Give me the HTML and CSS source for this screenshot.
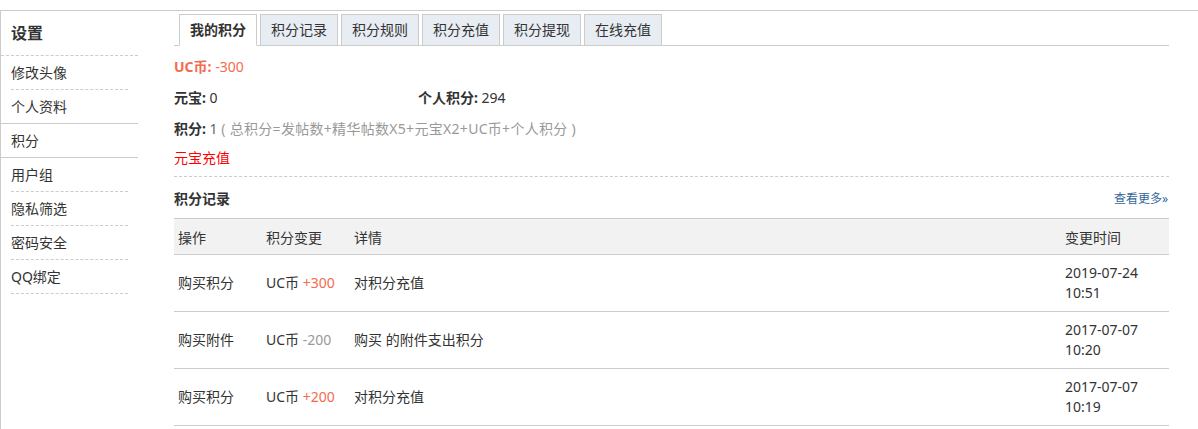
FILE: index.html
```html
<!DOCTYPE html>
<html lang="zh-CN">
<head>
<meta charset="utf-8">
<title>设置 - 积分</title>
<link rel="stylesheet" href="styles.css">
</head>
<body>
<div class="page">
  <aside class="side">
    <h2 class="side-title">设置</h2>
    <ul class="side-menu">
      <li class="side-item">修改头像</li>
      <li class="side-item nob">个人资料</li>
      <li class="side-item active">积分</li>
      <li class="side-item">用户组</li>
      <li class="side-item">隐私筛选</li>
      <li class="side-item">密码安全</li>
      <li class="side-item">QQ绑定</li>
    </ul>
  </aside>
  <main class="main">
    <ul class="tabs">
      <li class="tab current">我的积分</li>
      <li class="tab">积分记录</li>
      <li class="tab">积分规则</li>
      <li class="tab">积分充值</li>
      <li class="tab">积分提现</li>
      <li class="tab">在线充值</li>
    </ul>
    <div class="summary">
      <div class="line uc"><b>UC币:</b> -300</div>
      <div class="line two">
        <div class="col"><b>元宝:</b> 0</div>
        <div class="col"><b>个人积分:</b> 294</div>
      </div>
      <div class="line"><b>积分:</b> <span class="num">1</span> <span class="gray">( 总积分=发帖数+精华帖数X5+元宝X2+UC币+个人积分 )</span></div>
      <div class="line last"><a class="red">元宝充值</a></div>
    </div>
    <div class="rec-head">
      <h3 class="rec-title">积分记录</h3>
      <a class="more">查看更多»</a>
    </div>
    <table class="rec">
      <colgroup>
        <col class="c1"><col class="c2"><col class="c3"><col class="c4">
      </colgroup>
      <thead>
        <tr><th>操作</th><th>积分变更</th><th>详情</th><th>变更时间</th></tr>
      </thead>
      <tbody>
        <tr><td>购买积分</td><td>UC币 <span class="plus">+300</span></td><td>对积分充值</td><td>2019-07-24 10:51</td></tr>
        <tr><td>购买附件</td><td>UC币 <span class="minus">-200</span></td><td>购买 的附件支出积分</td><td>2017-07-07 10:20</td></tr>
        <tr><td>购买积分</td><td>UC币 <span class="plus">+200</span></td><td>对积分充值</td><td>2017-07-07 10:19</td></tr>
      </tbody>
    </table>
  </main>
</div>
</body>
</html>
```

FILE: styles.css
```css
* { box-sizing: border-box; }
html, body { margin: 0; padding: 0; background: #fff; }
body {
  font-family: "Noto Sans", "Noto Sans CJK SC", sans-serif;
  font-size: 14px;
  color: #333;
}
ul { list-style: none; margin: 0; padding: 0; }
h2, h3 { margin: 0; }
a { text-decoration: none; cursor: pointer; }

.page {
  margin-top: 10px;
  border-top: 1px solid #ccc;
  border-left: 1px solid #ccc;
  width: 1198px;
  min-height: 500px;
  display: flex;
  align-items: flex-start;
}

/* sidebar */
.side { width: 137px; flex: none; }
.side-title {
  height: 45px;
  line-height: 44px;
  padding-left: 10px;
  font-size: 16px;
  font-weight: 600;
  border-bottom: 1px dashed #ccc;
}
.side-item {
  margin: 0 10px;
  height: 34px;
  line-height: 33px;
  border-bottom: 1px dashed #ccc;
}
.side-item.nob { border-bottom: none; height: 33px; }
.side-item.active {
  margin: 0;
  padding-left: 10px;
  height: 35px;
  border-top: 1px solid #ccc;
  border-bottom: 1px solid #ccc;
}

/* main */
.main {
  margin-left: 36px;
  width: 995px;
  padding-top: 3px;
}
.tabs {
  display: flex;
  gap: 3px;
  padding-left: 5px;
  height: 32px;
  border-bottom: 1px solid #ccc;
}
.tab {
  width: 78px;
  height: 32px;
  line-height: 30px;
  text-align: center;
  border: 1px solid #ccc;
  background: #e7edf3;
  color: #333;
}
.tab.current {
  background: #fff;
  border-bottom-color: #fff;
  font-weight: bold;
}

.summary {
  padding-top: 5px;
  padding-bottom: 4px;
  border-bottom: 1px dashed #ccc;
}
.line { height: 31px; line-height: 31px; }
.line.last { height: 28px; line-height: 28px; }
.line b { font-weight: bold; }
.line.uc { color: #f26c4f; }
.line.two { display: flex; }
.line.two .col:first-child { width: 244px; }
.num { color: #666; }
.gray { color: #999; letter-spacing: 0.3px; }
.red { color: #f00; }

.rec-head {
  height: 41px;
  display: flex;
  align-items: center;
  justify-content: space-between;
}
.rec-title { font-size: 14px; font-weight: bold; }
.more { font-size: 12px; color: #336699; margin-right: 1px; }

.rec {
  width: 995px;
  table-layout: fixed;
  border-collapse: collapse;
  border-top: 1px solid #ccc;
}
.c1 { width: 88px; }
.c2 { width: 88px; }
.c3 { width: 711px; }
.c4 { width: 108px; }
.rec th {
  background: #f2f2f2;
  font-weight: normal;
  text-align: left;
  height: 36px;
  padding: 0 4px;
  border-bottom: 1px solid #ccc;
}
.rec td {
  height: 57px;
  padding: 8px 4px;
  line-height: 20px;
  border-bottom: 1px solid #ccc;
  vertical-align: middle;
}
.plus { color: #f26c4f; }
.minus { color: #999; }
```
